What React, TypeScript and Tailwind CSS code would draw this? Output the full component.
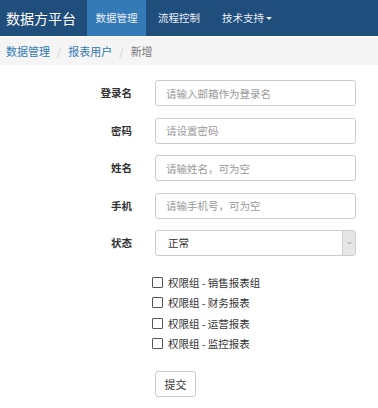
import React from "react";

const fields = [
  { label: "登录名", placeholder: "请输入邮箱作为登录名" },
  { label: "密码", placeholder: "请设置密码" },
  { label: "姓名", placeholder: "请输姓名，可为空" },
  { label: "手机", placeholder: "请输手机号，可为空" },
];

const groups = ["销售报表组", "财务报表", "运营报表", "监控报表"];

function App() {
  return (
    <div
      className="w-[378px] h-[408px] bg-white text-[#333] overflow-hidden"
      style={{ fontFamily: '"Noto Sans CJK SC", "Liberation Sans", sans-serif' }}
    >
      {/* navbar */}
      <nav className="h-[36px] bg-[#1f4d7c] flex items-stretch">
        <div className="w-[87px] pl-[6px] flex items-center text-white text-[14px] leading-none">
          数据方平台
        </div>
        <a className="w-[59px] bg-[#337ab7] text-[#e8eef5] text-[10.5px] flex items-center justify-center">
          数据管理
        </a>
        <a className="pl-[12px] pr-[11px] text-[#e8eef5] text-[10.5px] flex items-center">流程控制</a>
        <a className="px-[11px] text-[#e8eef5] text-[10.5px] flex items-center gap-[2px]">
          技术支持
          <span className="inline-block w-0 h-0 border-l-[3px] border-r-[3px] border-t-[3px] border-l-transparent border-r-transparent border-t-[#e8eef5]" />
        </a>
      </nav>

      {/* breadcrumb */}
      <div className="mt-px h-[28px] bg-[#f5f5f5] flex items-center px-[6px] text-[11px]">
        <span className="text-[#337ab7]">数据管理</span>
        <span className="text-[#ccc] px-[7px]">/</span>
        <span className="text-[#337ab7]">报表用户</span>
        <span className="text-[#ccc] px-[7px]">/</span>
        <span className="text-[#777]">新增</span>
      </div>

      {/* form */}
      <form className="pt-[15px] flex flex-col gap-[11.5px]">
        {fields.map((f) => (
          <div key={f.label} className="flex items-center">
            <label className="w-[132px] text-right font-bold text-[10.5px]">{f.label}</label>
            <input
              type="text"
              placeholder={f.placeholder}
              className="ml-[23px] w-[201px] h-[26px] border border-[#ccc] rounded-[3px] pl-[10px] text-[10.5px] placeholder:text-[#999] outline-none"
            />
          </div>
        ))}
        <div className="flex items-center">
          <label className="w-[132px] text-right font-bold text-[10.5px]">状态</label>
          <div className="ml-[23px] w-[201px] h-[26px] border border-[#ccc] rounded-[3px] flex items-stretch overflow-hidden">
            <div className="flex-1 flex items-center pl-[12px] text-[10.5px] text-[#333]">正常</div>
            <div className="w-[13px] bg-[#e6e6e6] border-l border-[#cfcfcf] flex items-center justify-center">
              <svg width="5" height="4" viewBox="0 0 5 4">
                <path d="M0.5 1 L2.5 3 L4.5 1" fill="none" stroke="#888" strokeWidth="0.8" />
              </svg>
            </div>
          </div>
        </div>

        <div className="mt-[9px] pl-[152px] flex flex-col gap-[9.5px]">
          {groups.map((g) => (
            <label key={g} className="flex items-center gap-[5px] text-[10.5px] leading-[11px] text-[#333]">
              <span className="w-[11px] h-[11px] border border-[#555] rounded-[1px] bg-white" />
              权限组 - {g}
            </label>
          ))}
        </div>

        <div className="mt-[9px] pl-[155px]">
          <button
            type="button"
            className="w-[41px] h-[26px] border border-[#ccc] rounded-[3px] bg-white text-[11px] text-[#333]"
          >
            提交
          </button>
        </div>
      </form>
    </div>
  );
}

export default App;
